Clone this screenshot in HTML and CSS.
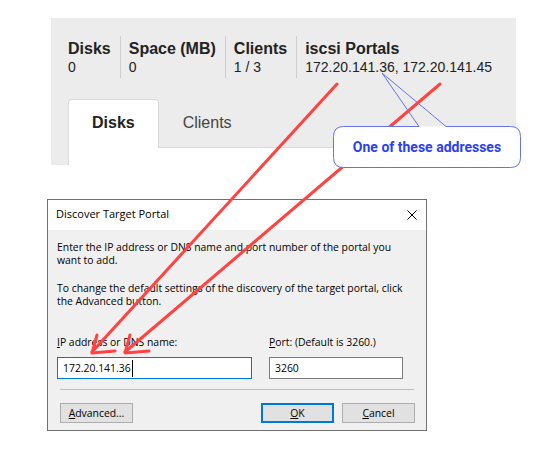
FILE: index.html
```html
<!DOCTYPE html>
<html>
<head>
<meta charset="utf-8">
<link rel="stylesheet" href="styles.css">
</head>
<body>
  <section class="panel">
    <div class="stats">
      <div class="stat"><div class="stat-label">Disks</div><div class="stat-value">0</div></div>
      <div class="stat"><div class="stat-label">Space (MB)</div><div class="stat-value">0</div></div>
      <div class="stat"><div class="stat-label">Clients</div><div class="stat-value">1 / 3</div></div>
      <div class="stat"><div class="stat-label">iscsi Portals</div><div class="stat-value">172.20.141.36, 172.20.141.45</div></div>
    </div>
    <div class="tabs">
      <div class="tab active">Disks</div>
      <div class="tab">Clients</div>
    </div>
    <div class="tab-content"></div>
  </section>

  <div class="dialog">
    <div class="titlebar">
      <span class="title">Discover Target Portal</span>
      <svg class="close" width="10" height="10" viewBox="0 0 10 10"><path d="M0.5 0.5 L9.5 9.5 M9.5 0.5 L0.5 9.5" stroke="#000" stroke-width="1" fill="none"/></svg>
    </div>
    <div class="dialog-body">
      <p class="para">Enter the IP address or DNS name and port number of the portal you<br>want to add.</p>
      <p class="para second">To change the default settings of the discovery of the target portal, click<br>the Advanced button.</p>
      <div class="fields">
        <div class="field">
          <label class="label"><u>I</u>P address or DNS name:</label>
          <div class="input focused">172.20.141.36<span class="caret"></span></div>
        </div>
        <div class="field">
          <label class="label"><u>P</u>ort: (Default is 3260.)</label>
          <div class="input">3260</div>
        </div>
      </div>
      <div class="separator"></div>
      <div class="buttons">
        <div class="btn advanced"><u>A</u>dvanced...</div>
        <div class="btn default"><u>O</u>K</div>
        <div class="btn"><u>C</u>ancel</div>
      </div>
    </div>
  </div>

  <svg class="arrows" width="550" height="464" viewBox="0 0 550 464">
    <g stroke="#ff4343" stroke-width="3" stroke-linecap="round" stroke-linejoin="round" fill="none">
      <path d="M337 84 L92 352"/>
      <path d="M115 351 L92 353 L97 335"/>
      <path d="M440 84 L125 352"/>
      <path d="M149 351 L125 353 L130 335"/>
    </g>
  </svg>

  <svg class="callout-shape" width="550" height="464" viewBox="0 0 550 464">
    <rect x="333.5" y="126.5" width="187" height="41" rx="10" ry="10" fill="#fff"/>
    <path d="M419 126.5 L382 73 L446 126.5 L510.5 126.5 Q520.5 126.5 520.5 136.5 L520.5 157.5 Q520.5 167.5 510.5 167.5 L343.5 167.5 Q333.5 167.5 333.5 157.5 L333.5 136.5 Q333.5 126.5 343.5 126.5 Z" fill="none" stroke="#6474ee" stroke-width="1"/>
  </svg>
  <div class="callout-text">One of these addresses</div>
</body>
</html>
```

FILE: styles.css
```css
html, body {
  margin: 0;
  padding: 0;
}

body {
  width: 550px;
  height: 464px;
  position: relative;
  overflow: hidden;
  background: #ffffff;
  font-family: "Liberation Sans", Arial, sans-serif;
}

/* ---------- top panel ---------- */
.panel {
  box-sizing: border-box;
  margin: 18px 0 0 51px;
  width: 465px;
  height: 147px;
  padding: 18px 0 0 17px;
  background: #ececec;
  display: flex;
  flex-direction: column;
}

.stats {
  display: flex;
}

.stat {
  padding: 4px 9px 2px 8px;
  border-left: 1px solid #cfcfcf;
}

.stat:first-child {
  padding-left: 0;
  border-left: none;
}

.stat-label {
  font-size: 16px;
  line-height: 18px;
  font-weight: 700;
  color: #222;
  white-space: nowrap;
}

.stat-value {
  font-size: 14px;
  line-height: 18px;
  color: #222;
  white-space: nowrap;
}

.tabs {
  margin-top: 21px;
  display: flex;
  border-bottom: 1px solid #d9d9d9;
}

.tab {
  padding: 14px 23px 16px;
  font-size: 16px;
  line-height: 18px;
  color: #444;
  border: 1px solid transparent;
  border-bottom: none;
  margin-bottom: -1px;
}

.tab.active {
  background: #fff;
  border-color: #dadada;
  border-radius: 4px 4px 0 0;
  font-weight: 700;
  color: #222;
}

.tab-content {
  flex: 1;
  background: #fff;
  border-left: 1px solid #dadada;
}

/* ---------- dialog ---------- */
.dialog {
  box-sizing: border-box;
  margin: 34px 0 0 47px;
  width: 380px;
  height: 232px;
  border: 1px solid #707070;
  background: #f0f0f0;
  font-family: "Open Sans", "Noto Sans", sans-serif;
  color: #000;
}

.titlebar {
  height: 30px;
  background: #fff;
  display: flex;
  align-items: flex-start;
  padding: 0 9px 0 8px;
}

.title {
  padding-top: 6px;
  font-size: 11px;
  line-height: 15px;
}

.close {
  margin-left: auto;
  margin-top: 10px;
}

.dialog-body {
  padding: 11px 9px 0;
  font-size: 10.4px;
  line-height: 13px;
}

.para {
  margin: 0;
  white-space: nowrap;
}

.para.second {
  margin-top: 15px;
}

.fields {
  margin-top: 28px;
  display: grid;
  grid-template-columns: 195px 134px;
  column-gap: 17px;
}

.label {
  display: block;
  white-space: nowrap;
}

.input {
  box-sizing: border-box;
  margin-top: 8px;
  height: 22px;
  border: 1px solid #7a7a7a;
  background: #fff;
  padding: 0 5px;
  line-height: 20px;
  display: flex;
  align-items: center;
}

.input.focused {
  border-color: #0078d7;
}

.caret {
  display: inline-block;
  width: 1px;
  height: 17px;
  background: #000;
  margin-left: 1px;
}

.separator {
  margin: 10px 3px 0;
  height: 1px;
  background: #bcbcbc;
}

.buttons {
  margin-top: 13px;
  display: flex;
  gap: 8px;
  padding: 0 2px 0 3px;
}

.btn {
  box-sizing: border-box;
  width: 73px;
  height: 20px;
  border: 1px solid #adadad;
  background: #e1e1e1;
  display: flex;
  align-items: center;
  justify-content: center;
}

.btn.advanced {
  margin-right: auto;
}

.btn.default {
  border: 2px solid #0078d7;
}

/* ---------- overlays ---------- */
.arrows,
.callout-shape {
  position: absolute;
  left: 0;
  top: 0;
  pointer-events: none;
}

.callout-text {
  position: absolute;
  left: 333px;
  top: 126px;
  width: 188px;
  height: 42px;
  display: flex;
  align-items: center;
  justify-content: center;
  font-family: Roboto, "Liberation Sans", sans-serif;
  font-size: 14px;
  font-weight: 700;
  color: #2b3ef2;
}
```
